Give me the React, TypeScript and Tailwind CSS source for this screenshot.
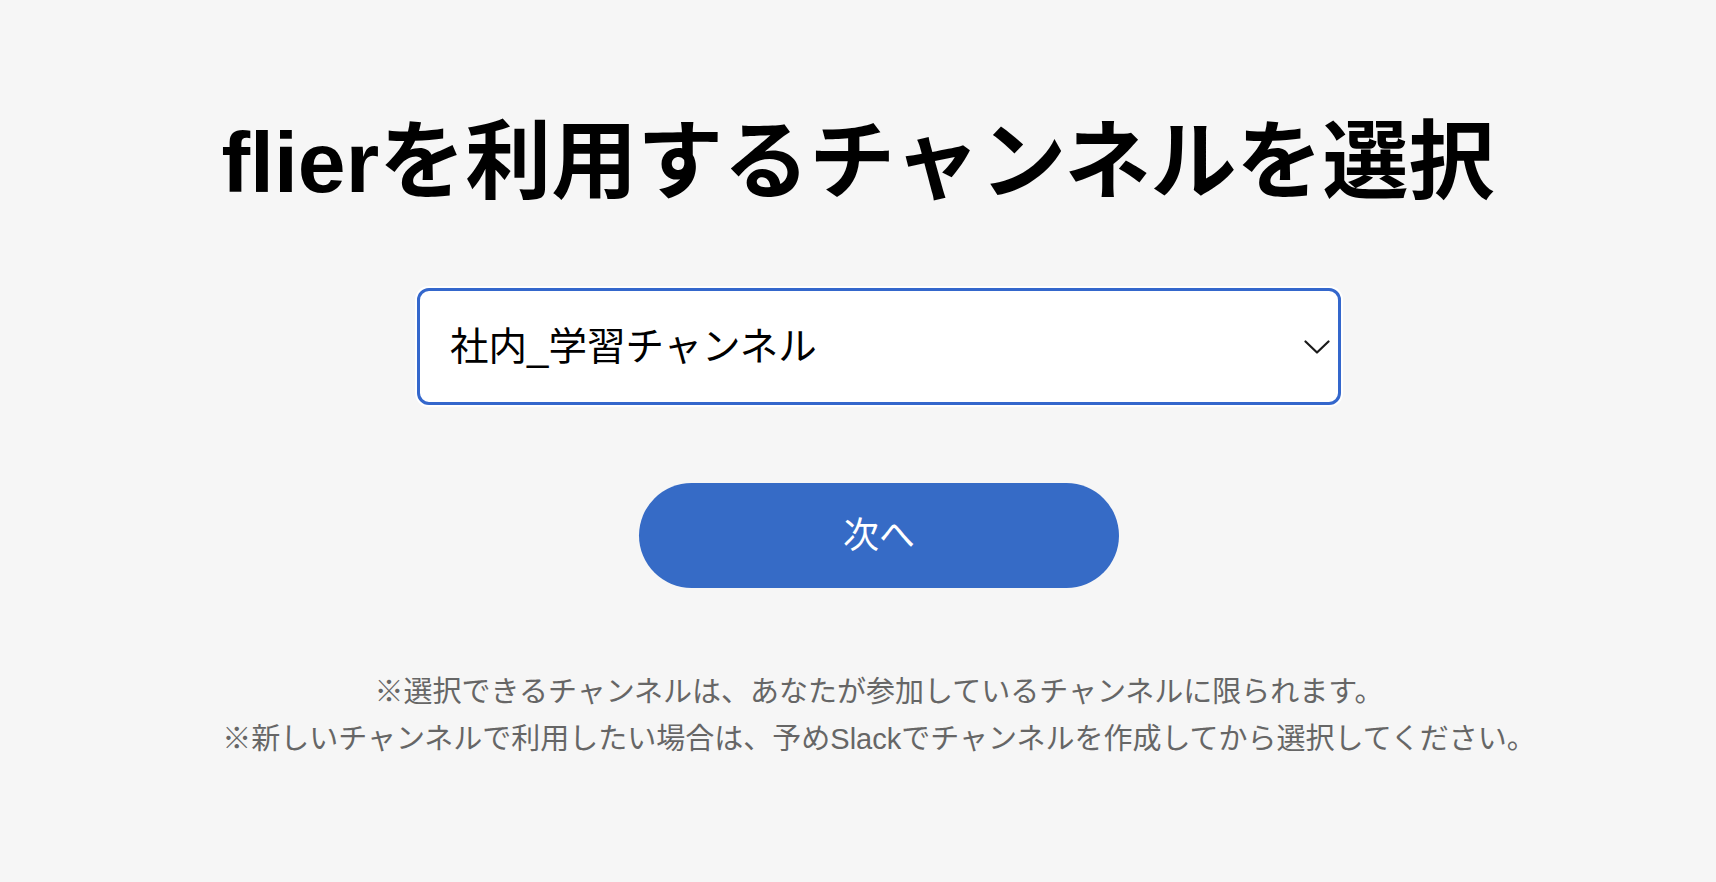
import { useState } from 'react';

const FONT = '"Liberation Sans", "Noto Sans CJK JP", sans-serif';

export default function App() {
  const [channel, setChannel] = useState('gakushu');

  return (
    <div className="min-h-screen w-full bg-[#f6f6f6] text-black" style={{ fontFamily: FONT }}>
      <div className="flex flex-col items-center pt-[119px]">
        {/* Title */}
        <h1 className="text-[86px] font-bold leading-none whitespace-nowrap">
          flierを利用するチャンネルを選択
        </h1>

        <div className="flex w-full flex-col items-center pl-[42px] pt-[83px]">
          {/* Channel select */}
          <div className="relative h-[117px] w-[924px] rounded-[12px] shadow-[0_0_0_2px_#ffffff]">
            <select
              value={channel}
              onChange={(e) => setChannel(e.target.value)}
              className="h-full w-full appearance-none rounded-[12px] border-[3px] border-[#3467cc] bg-white pl-[30px] pr-[60px] text-[38.5px] text-black outline-none"
              style={{ fontFamily: FONT }}
            >
              <option value="gakushu">社内_学習チャンネル</option>
              <option value="general">general</option>
              <option value="random">random</option>
            </select>
            <svg
              className="pointer-events-none absolute right-[11px] top-[52px]"
              width="26"
              height="15"
              viewBox="0 0 26 15"
              fill="none"
            >
              <path d="M1.5 1.5 L13 12.5 L24.5 1.5" stroke="#1a1a1a" strokeWidth="2.2" strokeLinecap="round" strokeLinejoin="round" />
            </svg>
          </div>

          {/* Next button */}
          <button className="mt-[78px] flex h-[105px] w-[480px] items-center justify-center rounded-full bg-[#366bc6] text-[36px] text-white">
            次へ
          </button>

          {/* Notes */}
          <div className="mt-[81px] text-center text-[29px] leading-[47px] text-[#666666]">
            <p>※選択できるチャンネルは、あなたが参加しているチャンネルに限られます。</p>
            <p>※新しいチャンネルで利用したい場合は、予めSlackでチャンネルを作成してから選択してください。</p>
          </div>
        </div>
      </div>
    </div>
  );
}
